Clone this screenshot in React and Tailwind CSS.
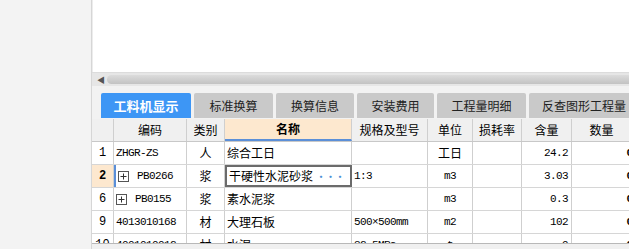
import React from "react";

const cols = [
  { key: "no", w: "w-[22px]" },
  { key: "code", w: "w-[73px]" },
  { key: "type", w: "w-[38px]" },
  { key: "name", w: "w-[127px]" },
  { key: "spec", w: "w-[76px]" },
  { key: "unit", w: "w-[45px]" },
  { key: "loss", w: "w-[49px]" },
  { key: "qty", w: "w-[50px]" },
  { key: "amt", w: "w-[60px]" },
];

const heads = ["", "编码", "类别", "名称", "规格及型号", "单位", "损耗率", "含量", "数量"];

const rows = [
  { no: "1", code: "ZHGR-ZS", type: "人", name: "综合工日", spec: "", unit: "工日", qty: "24.2" },
  { no: "2", code: "PB0266", plus: true, type: "浆", name: "干硬性水泥砂浆", spec: "1:3", unit: "m3", qty: "3.03", sel: true },
  { no: "6", code: "PB0155", plus: true, type: "浆", name: "素水泥浆", spec: "", unit: "m3", qty: "0.3" },
  { no: "9", code: "4013010168", type: "材", name: "大理石板", spec: "500×500mm", unit: "m2", qty: "102" },
  { no: "10", code: "4001010012", type: "材", name: "水泥", spec: "32.5MPa", unit: "t", qty: "9" },
];

const tabs = [
  { t: "工料机显示", w: "w-[90px]", on: true },
  { t: "标准换算", w: "w-[79px]" },
  { t: "换算信息", w: "w-[78px]" },
  { t: "安装费用", w: "w-[77px]" },
  { t: "工程量明细", w: "w-[89px]" },
  { t: "反查图形工程量", w: "w-[110px]" },
];

const cjk = { fontFamily: '"Noto Sans CJK SC", sans-serif' };
const mono = { fontFamily: '"Liberation Mono", "Noto Sans CJK SC", monospace' };

function PlusBox() {
  return (
    <span className="inline-flex items-center justify-center w-[11px] h-[11px] border border-[#555] mr-[8px] shrink-0">
      <svg width="7" height="7" viewBox="0 0 7 7">
        <path d="M3.5 0.5v6M0.5 3.5h6" stroke="#333" strokeWidth="1" />
      </svg>
    </span>
  );
}

export default function App() {
  return (
    <div className="flex w-[629px] h-[249px] overflow-hidden bg-white text-black whitespace-nowrap" style={cjk}>
      <div className="w-[92px] shrink-0 bg-[#f3f3f3] border-r border-[#d6d6d6]" />

      <div className="flex-1 flex flex-col min-w-0 overflow-hidden">
        <div className="h-[72px] bg-white border-l border-[#ececec]" />

        {/* horizontal scrollbar */}
        <div className="h-[14px] bg-[#e6e6e6] border-t border-[#dcdcdc] flex items-center pl-[5px]">
          <span className="text-[#555] text-[8px] leading-none w-[10px]">◀</span>
          <div className="flex-1 h-[9px] rounded-l-[5px] bg-gradient-to-b from-[#dcdcdc] to-[#c2c2c2]" />
        </div>

        <div className="h-[7px] bg-[#f2f2f2]" />

        {/* tabs */}
        <div className="h-[26px] bg-[#f2f2f2] flex pl-[9px] gap-[3px]">
          {tabs.map((tb) => (
            <div
              key={tb.t}
              className={`${tb.w} shrink-0 h-[25px] flex items-center justify-center rounded-t-[2px] ${
                tb.on ? "bg-[#3d96f5] text-white font-bold text-[13px]" : "bg-[#c9c9c9] text-[#222] text-[12px]"
              }`}
            >
              {tb.t}
            </div>
          ))}
        </div>

        {/* table */}
        <div className="h-[124px] overflow-hidden">
          <div className="flex h-[23px] bg-[#f0f0f0] border-b border-[#c8c8c8] text-[12px]">
            {cols.map((c, i) => (
              <div
                key={c.key}
                className={`${c.w} shrink-0 flex items-center justify-center border-r border-[#cfcfcf] ${
                  c.key === "name" ? "bg-[#fde8cf] font-bold border-b-2 border-b-[#5b8fd8]" : ""
                }`}
              >
                {heads[i]}
              </div>
            ))}
          </div>

          {rows.map((r) => (
            <div key={r.no} className="flex h-[23px] border-b border-[#d6d6d6] text-[12px]">
              <div
                className={`w-[22px] shrink-0 flex items-center justify-center border-r border-[#cfcfcf] ${
                  r.sel ? "bg-[#fde8cf] font-bold" : "bg-white"
                }`}
                style={mono}
              >
                <span className="text-[12px]">{r.no}</span>
              </div>
              <div
                className={`w-[73px] shrink-0 flex items-center pl-[2px] border-r border-[#cfcfcf] ${
                  r.sel ? "border-l-2 border-l-[#5b8fd8]" : ""
                }`}
                style={mono}
              >
                {r.plus && <PlusBox />}
                <span className="text-[11px] tracking-[-0.6px]">{r.code}</span>
              </div>
              <div className="w-[38px] shrink-0 flex items-center justify-center border-r border-[#cfcfcf]">
                {r.type}
              </div>
              <div
                className={`w-[127px] shrink-0 flex items-center pl-[2px] overflow-hidden ${
                  r.sel ? "border-2 border-[#6b6b6b] justify-between pr-[5px]" : "border-r border-[#cfcfcf]"
                }`}
              >
                <span>{r.name}</span>
                {r.sel && <span className="text-[#4a8fd6] text-[9px] font-bold tracking-[0.5px] leading-none">•••</span>}
              </div>
              <div className="w-[76px] shrink-0 flex items-center pl-[2px] border-r border-[#cfcfcf]" style={mono}>
                <span className="text-[11px] tracking-[-0.6px]">{r.spec}</span>
              </div>
              <div className="w-[45px] shrink-0 flex items-center justify-center border-r border-[#cfcfcf]">
                {r.unit === "工日" ? r.unit : <span style={mono} className="text-[11px] tracking-[-0.6px]">{r.unit}</span>}
              </div>
              <div className="w-[49px] shrink-0 border-r border-[#cfcfcf]" />
              <div className="w-[50px] shrink-0 flex items-center justify-end pr-[3px] border-r border-[#cfcfcf]" style={mono}>
                <span className="text-[11px] tracking-[-0.6px]">{r.qty}</span>
              </div>
              <div className="w-[61px] shrink-0 flex items-center justify-end pr-0" style={mono}>
                <span className="text-[11px] font-bold">0</span>
              </div>
            </div>
          ))}
        </div>

        <div className="flex-1 bg-[#f0f0f0] border-t border-[#b8b8b8]" />
      </div>
    </div>
  );
}
